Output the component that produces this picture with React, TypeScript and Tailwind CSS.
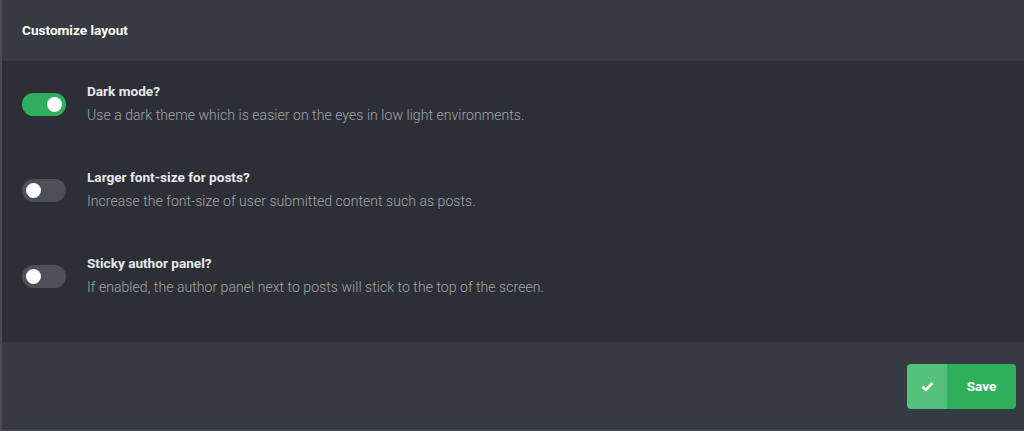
import React from "react";

function Toggle({ on }: { on: boolean }) {
  return (
    <div
      className={`w-[44px] h-[23px] rounded-full flex items-center px-[4px] shrink-0 ${
        on ? "bg-[#2daf5b] justify-end" : "bg-[#4b5059] justify-start"
      }`}
    >
      <div className="w-[15px] h-[15px] rounded-full bg-white" />
    </div>
  );
}

const rows = [
  {
    on: true,
    title: "Dark mode?",
    desc: "Use a dark theme which is easier on the eyes in low light environments.",
  },
  {
    on: false,
    title: "Larger font-size for posts?",
    desc: "Increase the font-size of user submitted content such as posts.",
  },
  {
    on: false,
    title: "Sticky author panel?",
    desc: "If enabled, the author panel next to posts will stick to the top of the screen.",
  },
];

export default function App() {
  return (
    <div
      className="w-[1024px] h-[431px] bg-[#363a43] flex flex-col border-l-2 border-b border-[#4a4c50] overflow-hidden"
      style={{ fontFamily: "Roboto, 'Liberation Sans', sans-serif" }}
    >
      <div className="h-[62px] shrink-0 flex items-center px-[20px] border-b border-[#2c2e35]">
        <span className="text-[13.6px] font-bold text-white">Customize layout</span>
      </div>
      <div className="h-[280px] shrink-0 bg-[#2d2f37] flex flex-col pt-[19px] px-[20px] gap-[39px]">
        {rows.map((r) => (
          <div key={r.title} className="flex items-center gap-[21px] h-[47px]">
            <Toggle on={r.on} />
            <div className="flex flex-col gap-[8px] -mt-[3px]">
              <span className="text-[13.6px] font-bold text-[#e8e9eb] leading-[16px]">{r.title}</span>
              <span className="text-[14px] font-light tracking-[0.05px] text-[#a3a6ab] leading-[16px]">
                {r.desc}
              </span>
            </div>
          </div>
        ))}
      </div>
      <div className="flex-1 flex justify-end items-start pt-[22px] pr-[8px]">
        <button className="h-[45px] w-[109px] rounded-[4px] overflow-hidden flex">
          <span className="w-[40px] h-full bg-[#53c17a] flex items-center justify-center">
            <svg width="13" height="11" viewBox="0 0 13 11">
              <path d="M1.5 5.5 L4.8 8.8 L11.5 2" stroke="white" strokeWidth="2.6" fill="none" />
            </svg>
          </span>
          <span className="flex-1 h-full bg-[#2eb05a] flex items-center justify-center text-[13.6px] font-bold text-white">
            Save
          </span>
        </button>
      </div>
    </div>
  );
}
